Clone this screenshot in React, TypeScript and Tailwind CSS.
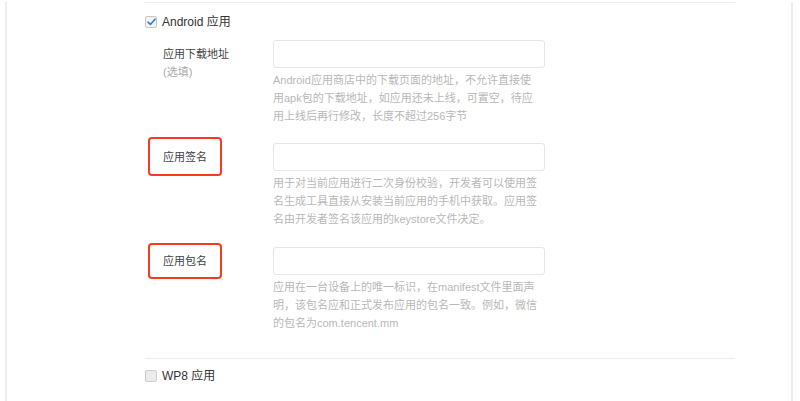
import React from "react";

const font = { fontFamily: '"Liberation Sans", "Noto Sans CJK SC", sans-serif' };

function Checkbox({ checked }: { checked: boolean }) {
  return checked ? (
    <span className="flex h-[12px] w-[12px] items-center justify-center rounded-[2px] border border-[#c8c8c8] bg-[#f4f4f4]">
      <svg width="9" height="8" viewBox="0 0 9 8">
        <path d="M1 4.2 L3.4 6.5 L8 1.2" fill="none" stroke="#2f7be5" strokeWidth="1.6" strokeLinecap="round" strokeLinejoin="round" />
      </svg>
    </span>
  ) : (
    <span className="block h-[12px] w-[12px] rounded-[2px] border border-[#cfcfcf] bg-[#ececec]" />
  );
}

type RowProps = {
  label: string;
  sub?: string;
  help: string[];
  box?: { top: number; height: number };
  mb: number;
};

function Row({ label, sub, help, box, mb }: RowProps) {
  return (
    <div className="flex" style={{ marginBottom: mb }}>
      <div className="relative w-[128px] shrink-0 pl-[18px] pt-[5px] text-[11px] leading-[18px] text-[#444]">
        {box && (
          <div
            className="absolute left-[3px] w-[74px] rounded-[4px] border-2 border-[#fa3a1e]"
            style={{ top: box.top, height: box.height }}
          />
        )}
        <div>{label}</div>
        {sub && <div className="text-[#aaa]">{sub}</div>}
      </div>
      <div className="w-[272px]">
        <div className="h-[28px] rounded-[3px] border border-[#e6e6e6] bg-white" />
        <div className="mt-[3px] text-[11px] leading-[18px] text-[#b8b8b8]">
          {help.map((l, i) => (
            <div key={i} className="whitespace-nowrap">{l}</div>
          ))}
        </div>
      </div>
    </div>
  );
}

export default function App() {
  return (
    <div className="h-[401px] w-[800px] overflow-hidden bg-white" style={font}>
      <div className="ml-[5px] h-full w-[788px] border-x-2 border-[#eeeeee] pl-[138px]">
        <div className="w-[590px]">
          <div className="mt-[2px] h-px bg-[#ececec]" />
          <div className="mt-[10px] flex h-[18px] items-center gap-[5px] text-[12px] text-[#333]">
            <Checkbox checked />
            <span>Android 应用</span>
          </div>
          <div className="mt-[9px]">
            <Row
              label="应用下载地址"
              sub="(选填)"
              help={[
                "Android应用商店中的下载页面的地址，不允许直接使",
                "用apk包的下载地址，如应用还未上线，可置空，待应",
                "用上线后再行修改，长度不超过256字节",
              ]}
              mb={18}
            />
            <Row
              label="应用签名"
              help={[
                "用于对当前应用进行二次身份校验，开发者可以使用签",
                "名生成工具直接从安装当前应用的手机中获取。应用签",
                "名由开发者签名该应用的keystore文件决定。",
              ]}
              box={{ top: -6, height: 39 }}
              mb={19}
            />
            <Row
              label="应用包名"
              help={[
                "应用在一台设备上的唯一标识，在manifest文件里面声",
                "明，该包名应和正式发布应用的包名一致。例如，微信",
                "的包名为com.tencent.mm",
              ]}
              box={{ top: -4, height: 36 }}
              mb={26}
            />
          </div>
          <div className="h-px bg-[#ececec]" />
          <div className="mt-[8px] flex h-[18px] items-center gap-[5px] text-[12px] text-[#333]">
            <Checkbox checked={false} />
            <span>WP8 应用</span>
          </div>
        </div>
      </div>
    </div>
  );
}
